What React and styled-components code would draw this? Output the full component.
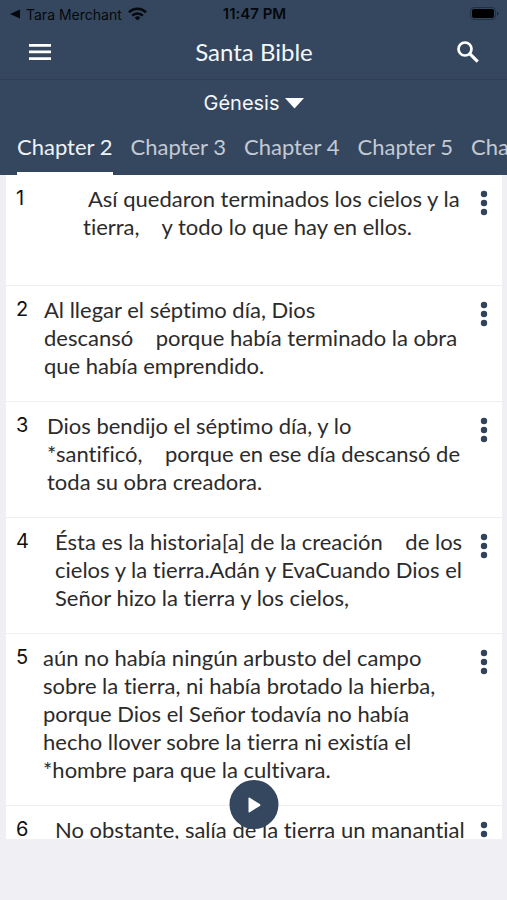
import React, { useState } from "react";
import styled, { createGlobalStyle } from "styled-components";

const GlobalStyle = createGlobalStyle`
  * {
    box-sizing: border-box;
  }
  body {
    margin: 0;
    background: #efeff4;
    font-family: Lato, "Open Sans", sans-serif;
    font-variant-ligatures: none;
  }
  button {
    padding: 0;
    border: 0;
    background: none;
    font: inherit;
    color: inherit;
    cursor: pointer;
  }
`;

const Page = styled.div`
  display: flex;
  flex-direction: column;
  height: 100vh;
`;

const Header = styled.header`
  background: #35475e;
  color: #f4f7fb;
`;

const StatusBar = styled.div`
  display: grid;
  grid-template-columns: 1fr auto 1fr;
  align-items: center;
  height: 28px;
  padding: 0 8px 0 10px;
  font-family: Inter, sans-serif;
  font-size: 14px;
  color: #05080c;
`;

const BackApp = styled.button`
  display: flex;
  align-items: center;
  gap: 6px;
  justify-self: start;
`;

const Clock = styled.span`
  font-size: 15px;
  line-height: 18px;
  font-weight: 600;
`;

const Battery = styled.svg`
  justify-self: end;
`;

const TitleBar = styled.div`
  display: grid;
  grid-template-columns: 48px 1fr 48px;
  align-items: center;
  height: 52px;
  padding: 0 15px 4px 16px;
  border-bottom: 1px solid #2f4056;
`;

const Title = styled.h1`
  margin: 0;
  font-size: 24px;
  line-height: 28px;
  font-weight: 400;
  text-align: center;
`;

const IconButton = styled.button`
  display: flex;
  align-items: center;
  justify-content: center;
  width: 48px;
  height: 48px;
`;

const BookButton = styled.button`
  display: flex;
  align-items: center;
  gap: 5px;
  height: 46px;
  margin: 0 auto;
  && {
    font-family: Inter, sans-serif;
    font-size: 20px;
  }
`;

const Tabs = styled.nav`
  display: flex;
  gap: 18px;
  height: 49px;
  padding-left: 17px;
  overflow: hidden;
`;

const Tab = styled.button`
  flex: none;
  && {
    padding-bottom: 5px;
    border-bottom: 3px solid ${(props) => (props.$active ? "#fff" : "transparent")};
    font-size: 22px;
    color: ${(props) => (props.$active ? "#eef2f7" : "#c3cad5")};
    white-space: nowrap;
  }
`;

const Reader = styled.main`
  position: relative;
  flex: 1;
  min-height: 0;
  margin: 0 5px 61px 6px;
`;

const VerseList = styled.ol`
  height: 100%;
  margin: 0;
  padding: 0;
  overflow: hidden;
  list-style: none;
  background: #fff;
`;

const VerseRow = styled.li`
  display: flex;
  align-items: flex-start;
  min-height: 111px;
  padding: 10px 5px 21px 10px;
  border-bottom: 1px solid #eeeff3;
`;

const VerseNumber = styled.span`
  flex: none;
  width: 27px;
  font-family: Inter, sans-serif;
  font-size: 20px;
  line-height: 26px;
  color: #111;
`;

const VerseText = styled.p`
  flex: 1;
  margin: 0;
  padding-left: ${(props) => props.$indent}px;
  font-size: 22px;
  line-height: 28px;
  color: #2b2b2b;
  white-space: pre;
`;

const MoreButton = styled.button`
  flex: none;
  display: flex;
  justify-content: center;
  width: 26px;
  margin-top: 5px;
`;

const PlayButton = styled.button`
  position: absolute;
  bottom: 10px;
  left: 50%;
  display: flex;
  align-items: center;
  justify-content: center;
  width: 49px;
  height: 49px;
  transform: translateX(-50%);
  && {
    border-radius: 50%;
    background: #35475e;
  }
`;

const chapters = [2, 3, 4, 5, 6];

const verses = [
  {
    number: 1,
    indent: 40,
    text: " Así quedaron terminados los cielos y la\ntierra,    y todo lo que hay en ellos.",
  },
  {
    number: 2,
    indent: 1,
    text: "Al llegar el séptimo día, Dios\ndescansó    porque había terminado la obra\nque había emprendido.",
  },
  {
    number: 3,
    indent: 4,
    text: "Dios bendijo el séptimo día, y lo\n*santificó,    porque en ese día descansó de\ntoda su obra creadora.",
  },
  {
    number: 4,
    indent: 12,
    text: "Ésta es la historia[a] de la creación    de los\ncielos y la tierra.Adán y EvaCuando Dios el\nSeñor hizo la tierra y los cielos,",
  },
  {
    number: 5,
    indent: 0,
    text: "aún no había ningún arbusto del campo\nsobre la tierra, ni había brotado la hierba,\nporque Dios el Señor todavía no había\nhecho llover sobre la tierra ni existía el\n*hombre para que la cultivara.",
  },
  {
    number: 6,
    indent: 12,
    text: "No obstante, salía de la tierra un manantial\nque regaba toda la superficie del suelo.",
  },
];

const Verse = ({ number, indent, text }) => (
  <VerseRow>
    <VerseNumber>{number}</VerseNumber>
    <VerseText $indent={indent}>{text}</VerseText>
    <MoreButton aria-label={`Options for verse ${number}`}>
      <svg width="8" height="26" viewBox="0 0 8 26" fill="#30435b">
        <circle cx="4" cy="4" r="3.2" />
        <circle cx="4" cy="13" r="3.2" />
        <circle cx="4" cy="22" r="3.2" />
      </svg>
    </MoreButton>
  </VerseRow>
);

const App = () => {
  const [chapter, setChapter] = useState(2);

  return (
    <Page>
      <GlobalStyle />
      <Header>
        <StatusBar>
          <BackApp>
            <svg width="10" height="10" viewBox="0 0 10 10" fill="currentColor">
              <path d="M0 5 10 .5v9z" />
            </svg>
            Tara Merchant
            <svg width="19" height="14" viewBox="0 0 19 14" fill="none" stroke="currentColor" strokeWidth="2.6">
              <path d="M1 5.2a12.2 12.2 0 0 1 17 0" />
              <path d="M4.2 8.6a7.6 7.6 0 0 1 10.6 0" />
              <path d="M9.5 13.6 6.7 10.7a4 4 0 0 1 5.6 0z" fill="currentColor" stroke="none" />
            </svg>
          </BackApp>
          <Clock>11:47 PM</Clock>
          <Battery width="29" height="14" viewBox="0 0 29 14">
            <rect x=".5" y=".5" width="25" height="12" rx="3.5" fill="none" stroke="#223043" />
            <rect x="2" y="2" width="22" height="9" rx="2" fill="#000" />
            <path d="M27 4.5v4q1.5-.6 1.5-2t-1.5-2z" fill="#1c2838" />
          </Battery>
        </StatusBar>
        <TitleBar>
          <IconButton aria-label="Menu">
            <svg width="22" height="16" viewBox="0 0 22 16" fill="#fff">
              <path d="M0 0h22v2.7H0zM0 6.6h22v2.7H0zM0 13.2h22v2.7H0z" />
            </svg>
          </IconButton>
          <Title>Santa Bible</Title>
          <IconButton aria-label="Search">
            <svg width="22" height="22" viewBox="0 0 22 22" fill="none" stroke="#fff" strokeWidth="2.7">
              <circle cx="8" cy="8" r="6.5" />
              <path d="m12.7 12.7 8 8" strokeWidth="3.2" />
            </svg>
          </IconButton>
        </TitleBar>
        <BookButton>
          Génesis
          <svg width="19" height="11" viewBox="0 0 19 11" fill="#fff">
            <path d="M0 0h19L9.5 10.5z" />
          </svg>
        </BookButton>
        <Tabs>
          {chapters.map((item) => (
            <Tab key={item} $active={item === chapter} onClick={() => setChapter(item)}>
              Chapter {item}
            </Tab>
          ))}
        </Tabs>
      </Header>
      <Reader>
        <VerseList>
          {verses.map((verse) => (
            <Verse key={verse.number} {...verse} />
          ))}
        </VerseList>
        <PlayButton aria-label="Play">
          <svg width="14" height="16" viewBox="0 0 14 16" fill="#fff">
            <path d="M1 1.5Q1 0 2.3.8l10 6.2q1.4 1 0 2l-10 6.2Q1 16 1 14.5z" />
          </svg>
        </PlayButton>
      </Reader>
    </Page>
  );
};

export default App;
